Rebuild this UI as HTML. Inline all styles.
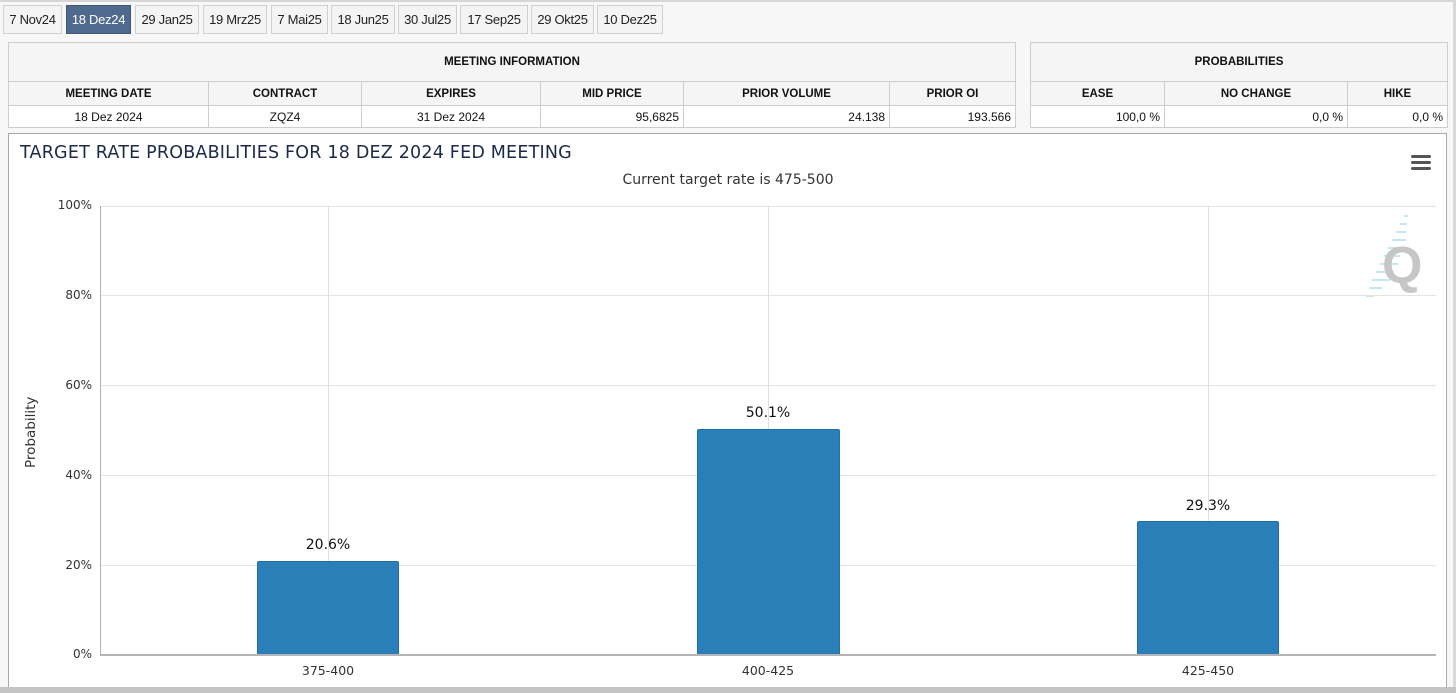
<!DOCTYPE html>
<html><head><meta charset="utf-8"><style>
*{margin:0;padding:0;box-sizing:border-box}
body{width:1456px;height:693px;overflow:hidden;background:#f7f7f7;font-family:"Liberation Sans",Arial,sans-serif;position:relative}
.a{position:absolute}
.tab{position:absolute;top:5px;height:29px;border:1px solid #d0d0d0;background:#f4f4f4;font-size:13px;color:#222;line-height:27px;text-align:center;letter-spacing:-0.3px}
.tab.on{background:#4e6a8c;color:#fff;border-color:#3f5874}
table{position:absolute;border-collapse:collapse;background:#fff;font-size:12px}
td{border:1px solid #c9cdd4;padding:0 4px;color:#111}
.h td{background:#f5f5f5;font-weight:bold;text-align:center;font-size:11.5px}
.v td{text-align:right;height:22px}
.grid{position:absolute;height:1px;background:#e4e4e4;left:100px;width:1336px}
.vg{position:absolute;width:1px;background:#e0e0e0;top:206px;height:449px}
.yl{position:absolute;left:40px;width:52px;text-align:right;font-family:"DejaVu Sans",sans-serif;font-size:12px;color:#333}
.bar{position:absolute;background:#2a7fb8;border:1px solid #1f6fa8;border-bottom:none;border-radius:2px 2px 0 0}
.bl{position:absolute;font-family:"DejaVu Sans",sans-serif;font-size:14px;color:#111;text-align:center;width:100px}
.xl{position:absolute;top:663px;font-family:"DejaVu Sans",sans-serif;font-size:12.5px;color:#333;width:100px;text-align:center}
</style></head><body>
<div class="a" style="left:0;top:0;width:1456px;height:2px;background:#d6d6d6"></div>
<div class="tab" style="left:3px;width:59px">7 Nov24</div>
<div class="tab on" style="left:66px;width:65px">18 Dez24</div>
<div class="tab" style="left:135px;width:64px">29 Jan25</div>
<div class="tab" style="left:203px;width:64px">19 Mrz25</div>
<div class="tab" style="left:271px;width:57px">7 Mai25</div>
<div class="tab" style="left:331px;width:64px">18 Jun25</div>
<div class="tab" style="left:398px;width:59px">30 Jul25</div>
<div class="tab" style="left:460px;width:68px">17 Sep25</div>
<div class="tab" style="left:531px;width:63px">29 Okt25</div>
<div class="tab" style="left:597px;width:66px">10 Dez25</div>

<table style="left:8px;top:42px;width:1008px">
<tr class="h"><td colspan="6" style="height:39px">MEETING INFORMATION</td></tr>
<tr class="h"><td style="height:24px;width:200px">MEETING DATE</td><td style="width:153px">CONTRACT</td><td style="width:179px">EXPIRES</td><td style="width:143px">MID PRICE</td><td style="width:206px">PRIOR VOLUME</td><td>PRIOR OI</td></tr>
<tr class="v"><td style="text-align:center">18 Dez 2024</td><td style="text-align:center">ZQZ4</td><td style="text-align:center">31 Dez 2024</td><td>95,6825</td><td>24.138</td><td>193.566</td></tr>
</table>
<table style="left:1030px;top:42px;width:418px">
<tr class="h"><td colspan="3" style="height:39px">PROBABILITIES</td></tr>
<tr class="h"><td style="height:24px;width:134px">EASE</td><td style="width:183px">NO CHANGE</td><td>HIKE</td></tr>
<tr class="v"><td>100,0 %</td><td>0,0 %</td><td>0,0 %</td></tr>
</table>

<div class="a" style="left:8px;top:133px;width:1439px;height:555px;background:#fff;border:1px solid #a8a8a8;border-bottom:none"></div>
<div class="a" style="left:0;top:687px;width:1456px;height:6px;background:#c4c4c4"></div>
<div class="a" style="left:1453px;top:0;width:3px;height:687px;background:#d8d8d8"></div>

<div class="a" style="left:20px;top:143px;font-family:'DejaVu Sans',sans-serif;font-size:17.5px;color:#1c2a4a;letter-spacing:0.2px">TARGET RATE PROBABILITIES FOR 18 DEZ 2024 FED MEETING</div>
<div class="a" style="left:0;width:1456px;top:172px;text-align:center;font-family:'DejaVu Sans',sans-serif;font-size:14px;color:#333">Current target rate is 475-500</div>
<div class="a" style="left:1411px;top:155px;width:20px;height:3px;background:#555;border-radius:2px"></div>
<div class="a" style="left:1411px;top:161px;width:20px;height:3px;background:#555;border-radius:2px"></div>
<div class="a" style="left:1411px;top:167px;width:20px;height:3px;background:#555;border-radius:2px"></div>
<svg class="a" style="left:1360px;top:210px" width="65" height="95"><g stroke="#c4e6f7" stroke-width="2"><line x1="44" y1="6" x2="48" y2="6"/><line x1="40" y1="14" x2="47" y2="14"/><line x1="36" y1="22" x2="46" y2="22"/><line x1="32" y1="30" x2="46" y2="30"/><line x1="28" y1="38" x2="40" y2="38"/><line x1="24" y1="46" x2="40" y2="46"/><line x1="20" y1="54" x2="38" y2="54"/><line x1="16" y1="62" x2="34" y2="62"/><line x1="12" y1="70" x2="30" y2="70"/><line x1="9" y1="78" x2="22" y2="78"/><line x1="6" y1="86" x2="14" y2="86"/></g><text x="22" y="73" font-family="Liberation Sans,sans-serif" font-weight="bold" font-size="52" fill="#c6c6c6">Q</text></svg>

<div class="grid" style="top:206px"></div><div class="grid" style="top:295px"></div><div class="grid" style="top:385px"></div><div class="grid" style="top:475px"></div><div class="grid" style="top:565px"></div>
<div class="vg" style="left:328px"></div><div class="vg" style="left:768px"></div><div class="vg" style="left:1208px"></div>
<div class="a" style="left:100px;top:206px;width:1px;height:449px;background:#b0b0b0"></div>
<div class="a" style="left:100px;top:654px;width:1336px;height:2px;background:#b5b5b5"></div>
<div class="yl" style="top:198px">100%</div><div class="yl" style="top:288px">80%</div><div class="yl" style="top:378px">60%</div><div class="yl" style="top:468px">40%</div><div class="yl" style="top:558px">20%</div><div class="yl" style="top:647px">0%</div>
<div class="a" style="left:23px;top:468px;transform:rotate(-90deg);transform-origin:0 0;font-family:'DejaVu Sans',sans-serif;font-size:13.5px;color:#333">Probability</div>

<div class="bar" style="left:257px;top:561px;width:142px;height:93px"></div>
<div class="bar" style="left:697px;top:429px;width:143px;height:225px"></div>
<div class="bar" style="left:1137px;top:521px;width:142px;height:133px"></div>
<div class="bl" style="left:278px;top:537px">20.6%</div>
<div class="bl" style="left:718px;top:405px">50.1%</div>
<div class="bl" style="left:1158px;top:498px">29.3%</div>
<div class="xl" style="left:278px">375-400</div>
<div class="xl" style="left:718px">400-425</div>
<div class="xl" style="left:1158px">425-450</div>
</body></html>
